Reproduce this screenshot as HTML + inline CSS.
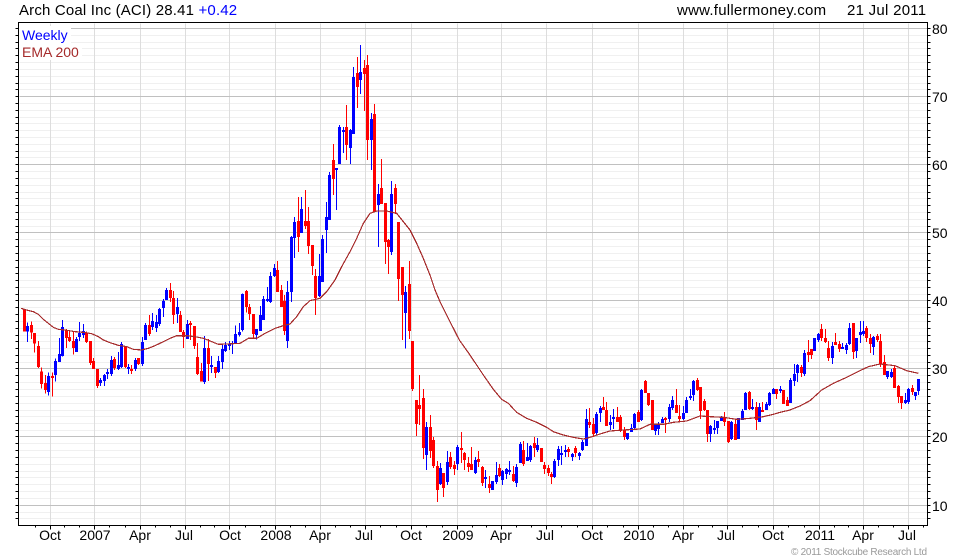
<!DOCTYPE html>
<html><head><meta charset="utf-8"><title>Arch Coal Inc (ACI)</title>
<style>
html,body{margin:0;padding:0;background:#fff}
svg{display:block}
text{font-family:"Liberation Sans",Arial,sans-serif;font-size:14px;fill:#000}
path,polyline{fill:none;shape-rendering:crispEdges}
.rw{stroke:#f00;stroke-width:3}.bw{stroke:#00f;stroke-width:3}
.rb{stroke:#f00;stroke-width:9}.bb{stroke:#00f;stroke-width:9}
.ema{stroke:#a52a2a;stroke-width:3.6;fill:none;shape-rendering:crispEdges}
</style></head><body>
<svg xmlns="http://www.w3.org/2000/svg" width="980" height="560" viewBox="0 0 980 560">
<rect width="980" height="560" fill="#fff"/>
<g transform="translate(.5,.5)">
<path stroke="#f0f0f0" d="M19 35H927M19 42H927M19 48H927M19 55H927M19 62H927M19 69H927M19 76H927M19 83H927M19 89H927M19 103H927M19 110H927M19 117H927M19 123H927M19 130H927M19 137H927M19 144H927M19 151H927M19 157H927M19 171H927M19 178H927M19 185H927M19 192H927M19 198H927M19 205H927M19 212H927M19 219H927M19 226H927M19 239H927M19 246H927M19 253H927M19 260H927M19 267H927M19 273H927M19 280H927M19 287H927M19 294H927M19 307H927M19 314H927M19 321H927M19 328H927M19 335H927M19 341H927M19 348H927M19 355H927M19 362H927M19 375H927M19 382H927M19 389H927M19 396H927M19 403H927M19 410H927M19 416H927M19 423H927M19 430H927M19 443H927M19 450H927M19 457H927M19 464H927M19 471H927M19 477H927M19 484H927M19 491H927M19 498H927M19 512H927M19 518H927"/>
<path stroke="#ddd" d="M50 23V525M94 23V525M140 23V525M185 23V525M229 23V525M275 23V525M320 23V525M365 23V525M411 23V525M457 23V525M501 23V525M546 23V525M592 23V525M638 23V525M683 23V525M727 23V525M773 23V525M819 23V525M863 23V525M908 23V525"/>
<path stroke="#c0c0c0" d="M19 28H927M19 96H927M19 164H927M19 232H927M19 300H927M19 368H927M19 436H927M19 505H927"/>
</g>
<rect x="19" y="26" width="52" height="17" fill="#fff"/>
<rect x="19" y="43" width="63" height="17" fill="#fff"/>

<!-- candles: left section -->
<g transform="translate(0,280) scale(.33333)">
<path class="rw" d="M73 87V155M94 124V177M103 159V218M115 183V264M124 262V325M136 285V340M157 277V350M199 147V204M208 150V186M220 155V224M259 155V189M271 183V255M280 234V267M292 267V324M343 231V270M376 198V264M394 255V282M415 234V255M448 105V168M511 9V66M520 33V132M541 93V156M550 150V204M571 123V180M583 138V207M592 189V285M604 249V305M625 177V303M646 261V294"/>
<path class="bw" d="M82 127V186M145 277V347M166 235V305M178 174V245M187 120V230M229 171V216M238 126V183M250 132V174M301 294V318M313 282V318M322 267V297M334 228V288M355 216V270M364 186V264M385 252V282M406 234V273M427 171V258M436 129V180M457 99V150M469 105V156M478 84V138M490 57V111M499 24V60M532 54V129M562 120V177M613 168V312M634 228V279M655 228V279M667 195V267M676 186V216M688 183V210M697 183V222M706 136V190M718 129V170"/>
<path class="rb" d="M73 87V155M94 135V158M103 159V191M115 198V261M124 274V312M136 309V330M157 288V294M199 150V174M208 171V183M220 183V204M259 159V186M271 183V249M280 243V267M292 267V318M343 237V264M376 198V261M394 267V273M415 234V252M448 135V162M511 30V54M520 54V105M541 105V156M550 156V171M571 129V135M583 138V198M592 231V282M604 273V305M625 204V252M646 261V279"/>
<path class="bb" d="M82 138V155M145 288V336M166 243V285M178 222V246M187 141V228M229 177V216M238 159V171M250 153V165M301 300V309M313 285V303M322 276V282M334 240V282M355 255V267M364 192V261M385 261V267M406 240V267M427 186V252M436 135V180M457 123V141M469 126V144M478 87V132M490 63V84M499 30V60M532 81V102M562 132V177M613 204V306M634 255V261M655 243V276M667 207V246M676 195V213M688 192V198M697 189V192M706 162V190M718 156V165"/>
<polyline class="ema" points="63,85 80,90 100,95 115,103 130,118 145,130 160,142 175,148 195,150 225,155 250,157 275,161 295,170 310,180 330,188 355,196 380,200 400,208 425,210 445,205 465,197 490,185 510,175 530,167 560,167 585,170 610,175 635,185 655,193 680,192 720,190"/>
</g>

<!-- candles: 2008 peak section -->
<g transform="translate(240,160) scale(.33333)">
<path class="rw" d="M19 390V458M28 432V480M40 462V535M112 303V396M124 375V441M133 405V525M175 111V276M196 90V207M205 141V282M217 255V345M226 327V465M280 -48V105M319 -165V0M352 -309V-156M373 -300V-147M382 -315V0M403 -168V156M424 -3V132M436 129V312M445 237V342M466 72V162M475 186V423M487 321V540M508 303V537"/>
<path class="bw" d="M7 400V515M49 507V538M61 438V513M70 408V480M82 381V426M91 336V429M103 312V351M142 363V564M154 228V426M163 171V294M184 111V219M238 282V411M247 225V366M259 126V279M268 36V180M289 24V150M298 -105V12M310 -99V-21M331 -93V12M340 -279V-78M361 -345V-198M394 -141V30M415 72V261M454 63V285M496 378V565"/>
<path class="rb" d="M19 393V441M28 441V462M40 462V522M112 330V396M124 390V441M133 423V513M175 183V231M196 183V198M205 183V258M217 255V318M226 348V414M280 0V57M319 -99V-45M352 -261V-219M373 -276V-258M382 -285V-60M403 -138V156M424 84V132M436 129V246M445 240V261M466 84V132M475 186V357M487 321V405M508 372V513"/>
<path class="bb" d="M7 402V510M49 507V525M61 465V513M70 417V480M82 417V423M91 348V426M103 324V348M142 396V543M154 231V396M163 186V234M184 147V219M238 348V408M247 237V366M259 171V210M268 45V180M289 24V30M298 -99V12M310 -90V-84M331 -90V-36M340 -249V-78M361 -264V-240M394 -123V-60M415 102V135M454 102V276M496 396V459"/>
<polyline class="ema" points="0,550 25,535 50,535 75,520 105,505 130,497 150,492 170,470 190,440 210,422 240,415 260,395 285,360 305,320 330,275 350,235 370,190 390,160 410,153 440,153 470,160 490,185 510,210 530,250 550,295 570,345 585,390 600,425"/>
</g>

<!-- candles: 2009 section -->
<g transform="translate(400,340) scale(.33333)">
<path class="rw" d="M37 3V153M49 180V288M58 105V255M70 147V357M91 225V354M100 291V384M112 363V486M130 399V471M151 336V387M163 363V405M184 276V369M193 336V390M205 351V396M214 321V390M235 333V381M247 378V438M268 408V459M298 372V411M340 378V426M370 303V378M403 291V351M424 324V366M433 366V402M445 375V408M454 396V432M505 321V351M526 318V351M568 204V264M580 234V291"/>
<path class="bw" d="M79 246V390M121 369V435M142 333V435M172 315V390M226 351V402M256 390V444M277 423V450M289 366V432M307 390V435M319 384V417M328 363V405M349 372V441M361 306V369M382 309V363M391 315V366M412 294V336M463 357V414M475 318V378M484 318V375M496 315V351M517 339V363M538 336V360M547 300V333M559 207V318M589 216V285"/>
<path class="rb" d="M37 3V147M49 180V252M58 195V207M70 174V324M91 261V333M100 300V378M112 378V450M130 399V444M151 351V381M163 375V387M184 324V330M193 339V360M205 369V381M214 372V390M235 357V366M247 381V429M268 432V444M298 384V408M340 402V423M370 330V372M403 309V324M424 324V366M433 375V387M445 384V399M454 402V411M505 327V336M526 324V339M568 246V255M580 252V282"/>
<path class="bb" d="M79 261V345M121 384V432M142 366V426M172 321V372M226 360V399M256 411V417M277 423V450M289 405V426M307 393V420M319 387V402M328 390V396M349 381V429M361 312V369M382 351V363M391 318V360M412 315V330M463 363V411M475 327V360M484 339V345M496 330V336M517 342V351M538 339V348M547 306V330M559 237V318M589 222V279"/>
<polyline class="ema" points="120,-115 150,-55 178,0 205,38 230,75 250,105 280,148 305,178 325,190 350,217 380,235 410,247 440,262 460,275 490,285 520,292 550,297 570,292"/>
</g>

<!-- candles: 2010 section -->
<g transform="translate(590,360) scale(.33333)">
<path class="rw" d="M40 111V150M49 126V198M82 141V186M91 165V216M103 201V240M145 150V186M166 60V99M175 99V138M187 120V210M226 171V219M259 87V159M268 135V186M322 54V93M331 81V177M343 117V153M352 150V246M403 156V198M415 183V249M436 177V240M478 93V150M499 126V210M517 126V156M559 87V117M580 90V132M592 111V138"/>
<path class="bw" d="M31 138V186M61 165V210M70 147V207M112 219V240M124 192V216M133 159V207M154 87V183M196 195V225M205 186V225M217 171V189M238 132V186M247 108V150M280 138V180M289 111V159M301 87V120M310 60V123M361 195V246M373 180V222M382 183V222M394 168V183M424 183V240M445 174V237M457 147V180M466 96V150M487 117V150M508 129V186M529 126V150M538 96V138M550 84V102M571 78V99"/>
<path class="rb" d="M40 141V150M49 150V198M82 171V186M91 171V213M103 210V231M145 156V186M166 63V99M175 99V135M187 120V210M226 174V180M259 135V159M268 168V177M322 60V90M331 81V153M343 123V150M352 150V222M403 171V186M415 183V246M436 192V240M478 96V147M499 141V180M517 150V156M559 87V102M580 90V132M592 120V138"/>
<path class="bb" d="M31 144V159M61 186V195M70 171V177M112 219V237M124 204V216M133 162V204M154 90V180M196 195V213M205 195V207M217 177V189M238 141V177M247 120V144M280 159V177M289 120V159M301 108V114M310 63V105M361 198V222M373 204V210M382 183V204M394 171V183M424 186V237M445 174V237M457 153V180M466 99V150M487 141V147M508 141V186M529 132V150M538 99V135M550 87V102M571 87V93"/>
<polyline class="ema" points="0,232 30,222 60,213 100,210 150,207 180,193 220,193 250,187 290,183 330,168 360,170 400,172 440,178 480,175 520,170 550,163 570,157"/>
</g>

<!-- candles: 2011 section -->
<g transform="translate(780,300) scale(.33333)">
<path class="rw" d="M64 195V231M85 120V186M94 147V177M124 72V123M136 87V129M145 123V183M166 99V135M178 123V156M220 69V177M259 78V126M271 102V159M292 102V126M301 102V201M313 165V225M343 198V264M355 255V309M364 288V327M397 255V285"/>
<path class="bw" d="M31 234V309M43 192V258M52 192V246M73 150V228M103 114V153M115 99V126M157 126V192M187 129V147M199 129V162M208 69V135M229 114V174M241 63V129M250 63V108M280 108V165M322 213V237M334 207V234M376 279V312M385 264V312M406 276V300M415 237V285"/>
<path class="rb" d="M64 201V219M85 156V165M94 147V165M124 87V114M136 114V126M145 144V174M166 126V135M178 132V147M220 69V156M259 84V114M271 114V132M292 108V120M301 123V192M313 186V225M343 204V264M355 258V291M364 288V309M397 264V276"/>
<path class="bb" d="M31 240V309M43 222V243M52 195V219M73 159V222M103 114V153M115 102V120M157 138V174M187 141V147M199 135V150M208 84V132M229 114V153M241 96V105M250 93V102M280 111V141M322 213V231M334 216V231M376 300V309M385 267V306M406 276V288M415 237V273"/>
<polyline class="ema" points="0,337 30,330 60,318 90,302 125,270 160,250 200,232 240,212 265,200 300,192 345,197 380,212 415,220"/>
</g>

<!-- axes -->
<g transform="translate(.5,.5)">
<path stroke="#000" d="M18 22H927V525H18Z"/>
<path stroke="#000" d="M15 28H18M15 35H18M15 42H18M15 48H18M15 55H18M15 62H18M15 69H18M15 76H18M15 83H18M15 89H18M15 96H18M15 103H18M15 110H18M15 117H18M15 123H18M15 130H18M15 137H18M15 144H18M15 151H18M15 157H18M15 164H18M15 171H18M15 178H18M15 185H18M15 192H18M15 198H18M15 205H18M15 212H18M15 219H18M15 226H18M15 232H18M15 239H18M15 246H18M15 253H18M15 260H18M15 267H18M15 273H18M15 280H18M15 287H18M15 294H18M15 300H18M15 307H18M15 314H18M15 321H18M15 328H18M15 335H18M15 341H18M15 348H18M15 355H18M15 362H18M15 368H18M15 375H18M15 382H18M15 389H18M15 396H18M15 403H18M15 410H18M15 416H18M15 423H18M15 430H18M15 436H18M15 443H18M15 450H18M15 457H18M15 464H18M15 471H18M15 477H18M15 484H18M15 491H18M15 498H18M15 505H18M15 512H18M15 518H18"/>
<path stroke="#000" d="M927 28H930M927 35H930M927 42H930M927 48H930M927 55H930M927 62H930M927 69H930M927 76H930M927 83H930M927 89H930M927 96H930M927 103H930M927 110H930M927 117H930M927 123H930M927 130H930M927 137H930M927 144H930M927 151H930M927 157H930M927 164H930M927 171H930M927 178H930M927 185H930M927 192H930M927 198H930M927 205H930M927 212H930M927 219H930M927 226H930M927 232H930M927 239H930M927 246H930M927 253H930M927 260H930M927 267H930M927 273H930M927 280H930M927 287H930M927 294H930M927 300H930M927 307H930M927 314H930M927 321H930M927 328H930M927 335H930M927 341H930M927 348H930M927 355H930M927 362H930M927 368H930M927 375H930M927 382H930M927 389H930M927 396H930M927 403H930M927 410H930M927 416H930M927 423H930M927 430H930M927 436H930M927 443H930M927 450H930M927 457H930M927 464H930M927 471H930M927 477H930M927 484H930M927 491H930M927 498H930M927 505H930M927 512H930M927 518H930"/>
<path stroke="#000" d="M35 525V527M64 525V527M79 525V527M109 525V527M125 525V527M155 525V527M170 525V527M200 525V527M214 525V527M245 525V527M260 525V527M290 525V527M305 525V527M335 525V527M350 525V527M380 525V527M396 525V527M426 525V527M442 525V527M472 525V527M486 525V527M516 525V527M531 525V527M561 525V527M577 525V527M607 525V527M623 525V527M653 525V527M668 525V527M698 525V527M712 525V527M742 525V527M758 525V527M788 525V527M804 525V527M834 525V527M848 525V527M878 525V527M893 525V527M923 525V527"/>
<path stroke="#000" d="M50 525V529M94 525V529M140 525V529M185 525V529M229 525V529M275 525V529M320 525V529M365 525V529M411 525V529M457 525V529M501 525V529M546 525V529M592 525V529M638 525V529M683 525V529M727 525V529M773 525V529M819 525V529M863 525V529M908 525V529"/>
</g>

<text x="19" y="15" style="font-size:15px;letter-spacing:.17px">Arch Coal Inc (ACI) 28.41 <tspan style="fill:#00f">+0.42</tspan></text>
<text x="677" y="15" style="font-size:15px;letter-spacing:.24px">www.fullermoney.com</text>
<text x="847" y="15" style="font-size:15px;letter-spacing:.27px">21 Jul 2011</text>
<text x="22" y="40" style="fill:#00f">Weekly</text>
<text x="22" y="57" style="fill:#a52a2a">EMA 200</text>

<g>
<text x="932" y="34">80</text><text x="932" y="102">70</text><text x="932" y="170">60</text><text x="932" y="238">50</text><text x="932" y="306">40</text><text x="932" y="374">30</text><text x="932" y="442">20</text><text x="932" y="511">10</text>
</g>
<g text-anchor="middle">
<text x="50" y="540">Oct</text><text x="95" y="540">2007</text><text x="140" y="540">Apr</text><text x="184" y="540">Jul</text><text x="230" y="540">Oct</text><text x="276" y="540">2008</text><text x="320" y="540">Apr</text><text x="364" y="540">Jul</text><text x="411" y="540">Oct</text><text x="458" y="540">2009</text><text x="501" y="540">Apr</text><text x="545" y="540">Jul</text><text x="592" y="540">Oct</text><text x="639" y="540">2010</text><text x="683" y="540">Apr</text><text x="726" y="540">Jul</text><text x="773" y="540">Oct</text><text x="820" y="540">2011</text><text x="863" y="540">Apr</text><text x="907" y="540">Jul</text>
</g>
<text x="791" y="555" textLength="136" lengthAdjust="spacing" style="font-size:10px;fill:#999">© 2011 Stockcube Research Ltd</text>
</svg>
</body></html>
